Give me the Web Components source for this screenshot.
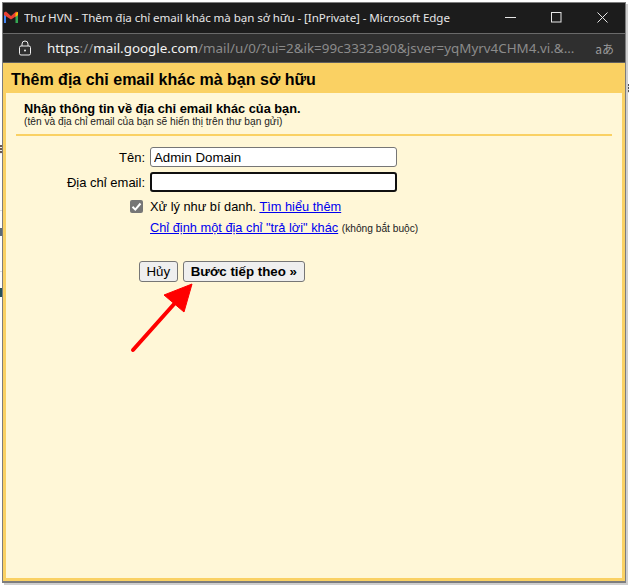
<!DOCTYPE html>
<html lang="vi"><head><meta charset="utf-8"><title>Thư HVN</title>
<style>
html,body{margin:0;height:585px;overflow:hidden;background:#fff}
body{font-family:"Liberation Sans",Arial,sans-serif;padding:2px 3px 2px 2px;box-sizing:border-box;display:flex}
</style></head><body>
<page-scraps></page-scraps>
<edge-window>
  <edge-titlebar slot="title">Thư HVN - Thêm địa chỉ email khác mà bạn sở hữu - [InPrivate] - Microsoft Edge</edge-titlebar>
  <edge-addressbar slot="address"></edge-addressbar>
  <gm-dialog heading="Thêm địa chỉ email khác mà bạn sở hữu">
    <gm-intro></gm-intro>
    <gm-form></gm-form>
  </gm-dialog>
</edge-window>
<script>
function def(name, html){
  customElements.define(name, class extends HTMLElement{
    constructor(){super();this.attachShadow({mode:'open'}).innerHTML=html;}
    connectedCallback(){const h=this.shadowRoot.querySelector('[data-h]');if(h)h.textContent=this.getAttribute('heading');}
  });
}
def('page-scraps',`<style>
:host{position:absolute;inset:0;display:block}
i{position:absolute;display:block}
</style>
<i style="left:0;top:145px;width:2px;height:9px;background:repeating-linear-gradient(#6b5a50 0 2px,#eee 2px 3px)"></i>
<i style="left:0;top:228px;width:2px;height:8px;background:#5a6a78"></i>
<i style="left:0;top:288px;width:2px;height:9px;background:#23505a"></i>
<i style="left:0;top:210px;width:2px;height:1px;background:#ddd"></i>
<i style="left:0;top:271px;width:2px;height:1px;background:#ddd"></i>
<i style="left:627px;top:84px;width:2px;height:9px;background:repeating-linear-gradient(#555 0 2px,#ddd 2px 3px)"></i>
<i style="left:626px;top:26px;width:2px;height:7px;background:#b0a080"></i>`);
def('edge-window',`<style>
:host{display:flex;flex-direction:column;flex:1;min-width:0;position:relative;border:1px solid #7d7d7d;border-bottom-width:2px;box-shadow:2px 2px 0 #cfcfcf}
</style><slot name="title"></slot><slot name="address"></slot><slot></slot>`);
def('edge-titlebar',`<style>
:host{display:flex;align-items:center;height:28px;padding-bottom:2px;background:#1c1c1c;color:#e6e6e6;border-bottom:1px solid #6a6a6a;flex:none}
svg{display:block;flex:none}
.t{margin-left:5px;flex:1;white-space:nowrap;overflow:hidden;font-family:"Noto Sans",sans-serif;font-size:11.6px;letter-spacing:-.08px}
.c{display:flex;align-items:center}
.b{width:46px;height:28px;display:flex;align-items:center;justify-content:center}
</style>
<svg width="16" height="14" viewBox="0 0 16 14"><path d="M1 13V3l2 .5V13z" fill="#4285f4"/><path d="M12.500 13V3.500l2.500-.5v10z" fill="#34a853"/><path d="M1 2.500 3 1.500 8 6l5-4.500 2 1V5L8 9.500 1 5z" fill="#ea4335"/><path d="M12.500 3.200 15 1.800V5l-2.500 2z" fill="#fbbc04"/></svg>
<span class="t"><slot></slot></span>
<span class="c">
<span class="b"><svg width="11" height="11"><path d="M0 5.500h11" stroke="#e6e6e6"/></svg></span>
<span class="b"><svg width="11" height="11"><rect x=".5" y=".5" width="9.500" height="9.500" fill="none" stroke="#e6e6e6"/></svg></span>
<span class="b"><svg width="11" height="11"><path d="M.5.500l10 10M10.500.500l-10 10" stroke="#e6e6e6"/></svg></span>
</span>`);
def('edge-addressbar',`<style>
:host{display:flex;align-items:center;height:28px;background:#2f2f2f;border-bottom:1px solid #5f5f5f;flex:none;font:13.400px "Noto Sans","Open Sans",sans-serif;color:#8b8b8b;white-space:nowrap}
svg{display:block;flex:none;margin-left:15px}
.u{margin-left:15px;flex:1;min-width:0;overflow:hidden}
b{font-weight:400;color:#f2f2f2}
.ra{color:#9a9a9a;font:12px "Noto Sans CJK JP","Noto Sans",sans-serif;margin-right:11px;flex:none}
</style>
<svg width="14" height="16" viewBox="0 0 14 16"><path d="M4 6V4a3 3 0 0 1 6 0v2" fill="none" stroke="#eee"/><rect x="1.500" y="6" width="11" height="9" rx="1.500" fill="none" stroke="#eee"/><circle cx="7" cy="10.500" r="1" fill="#eee"/></svg>
<span class="u"><b>https</b>://<b>mail.google.com</b>/mail/u/0/?ui=2&amp;ik=99c3332a90&amp;jsver=yqMyrv4CHM4.vi.&amp;...</span>
<span class="ra">aあ</span>`);
def('gm-dialog',`<style>
:host{display:flex;flex-direction:column;flex:1;min-height:0;background:#fad163;padding:0 3px 3px;font-family:"Liberation Sans",Arial,sans-serif;color:#000}
h1{margin:0;font-size:16px;font-weight:700;height:30px;line-height:33px;padding-left:5px;white-space:nowrap}
.b{flex:1;background:#fff7d7;position:relative;padding:0 10px}
svg{position:absolute;left:122px;top:183px}
</style><h1 data-h></h1><div class="b"><slot></slot>
<svg width="70" height="80" viewBox="0 0 70 80"><path d="M5 74 47 27" stroke="#f00" stroke-width="4" stroke-linecap="round"/><path d="M64 8 36 19 56 36z" fill="#f00" stroke="#f00" stroke-linejoin="round"/></svg></div>`);
def('gm-intro',`<style>
:host{display:block;border-bottom:2px solid #fad163;padding:8px 0 7px 8px}
b{display:block;font-size:12.800px;line-height:15px;white-space:nowrap}
small{display:block;font-size:10.200px;line-height:11px;color:#222;white-space:nowrap}
</style><b>Nhập thông tin về địa chỉ email khác của bạn.</b><small>(tên và địa chỉ email của bạn sẽ hiển thị trên thư bạn gửi)</small>`);
def('gm-form',`<style>
:host{display:block;font-size:13px;padding-top:11px;color:#000}
.g{display:grid;grid-template-columns:129px 247px;column-gap:5px;row-gap:5px;align-items:center}
label{text-align:right}
input[type=text]{box-sizing:border-box;width:247px;height:20px;border:1px solid #767676;border-radius:3px;padding:1px 3px;font:13.300px "Liberation Sans",Arial,sans-serif;margin:0;background:#fff;color:#000;outline:0;display:block}
input.f{border:2px solid #101010;padding:0 2px}
.r{margin-left:114px;font-size:12.800px}
.k{display:flex;align-items:center;height:21px;margin-top:4px}
.k i{width:13px;height:13px;border-radius:2px;background:#767676;display:block;margin-right:7px;flex:none}
.k svg{display:block}
.l2{padding-left:20px;height:21px;line-height:21px;white-space:nowrap}
a{color:#00e;text-decoration:underline}
small{font-size:10.200px;color:#222}
.bt{display:flex;gap:5px;margin:23px 0 0 123px}
button{height:21px;border:1px solid #767676;border-radius:3px;background:#efefef;font:13.300px "Liberation Sans",Arial,sans-serif;color:#000;padding:0 6.500px;margin:0}
button.p{font-weight:700;padding:0 7px}
</style>
<div class="g"><label>Tên:</label><input type="text" value="Admin Domain"><label>Địa chỉ email:</label><input class="f" type="text"></div>
<div class="r"><div class="k"><i><svg width="13" height="13"><path d="M2.500 6.800 5.300 9.600 10.500 3.500" fill="none" stroke="#fff" stroke-width="2"/></svg></i><span>Xử lý như bí danh. <a href="#">Tìm hiểu thêm</a></span></div>
<div class="l2"><a href="#">Chỉ định một địa chỉ "trả lời" khác</a> <small>(không bắt buộc)</small></div></div>
<div class="bt"><button>Hủy</button><button class="p">Bước tiếp theo »</button></div>`);
</script>
</body></html>
